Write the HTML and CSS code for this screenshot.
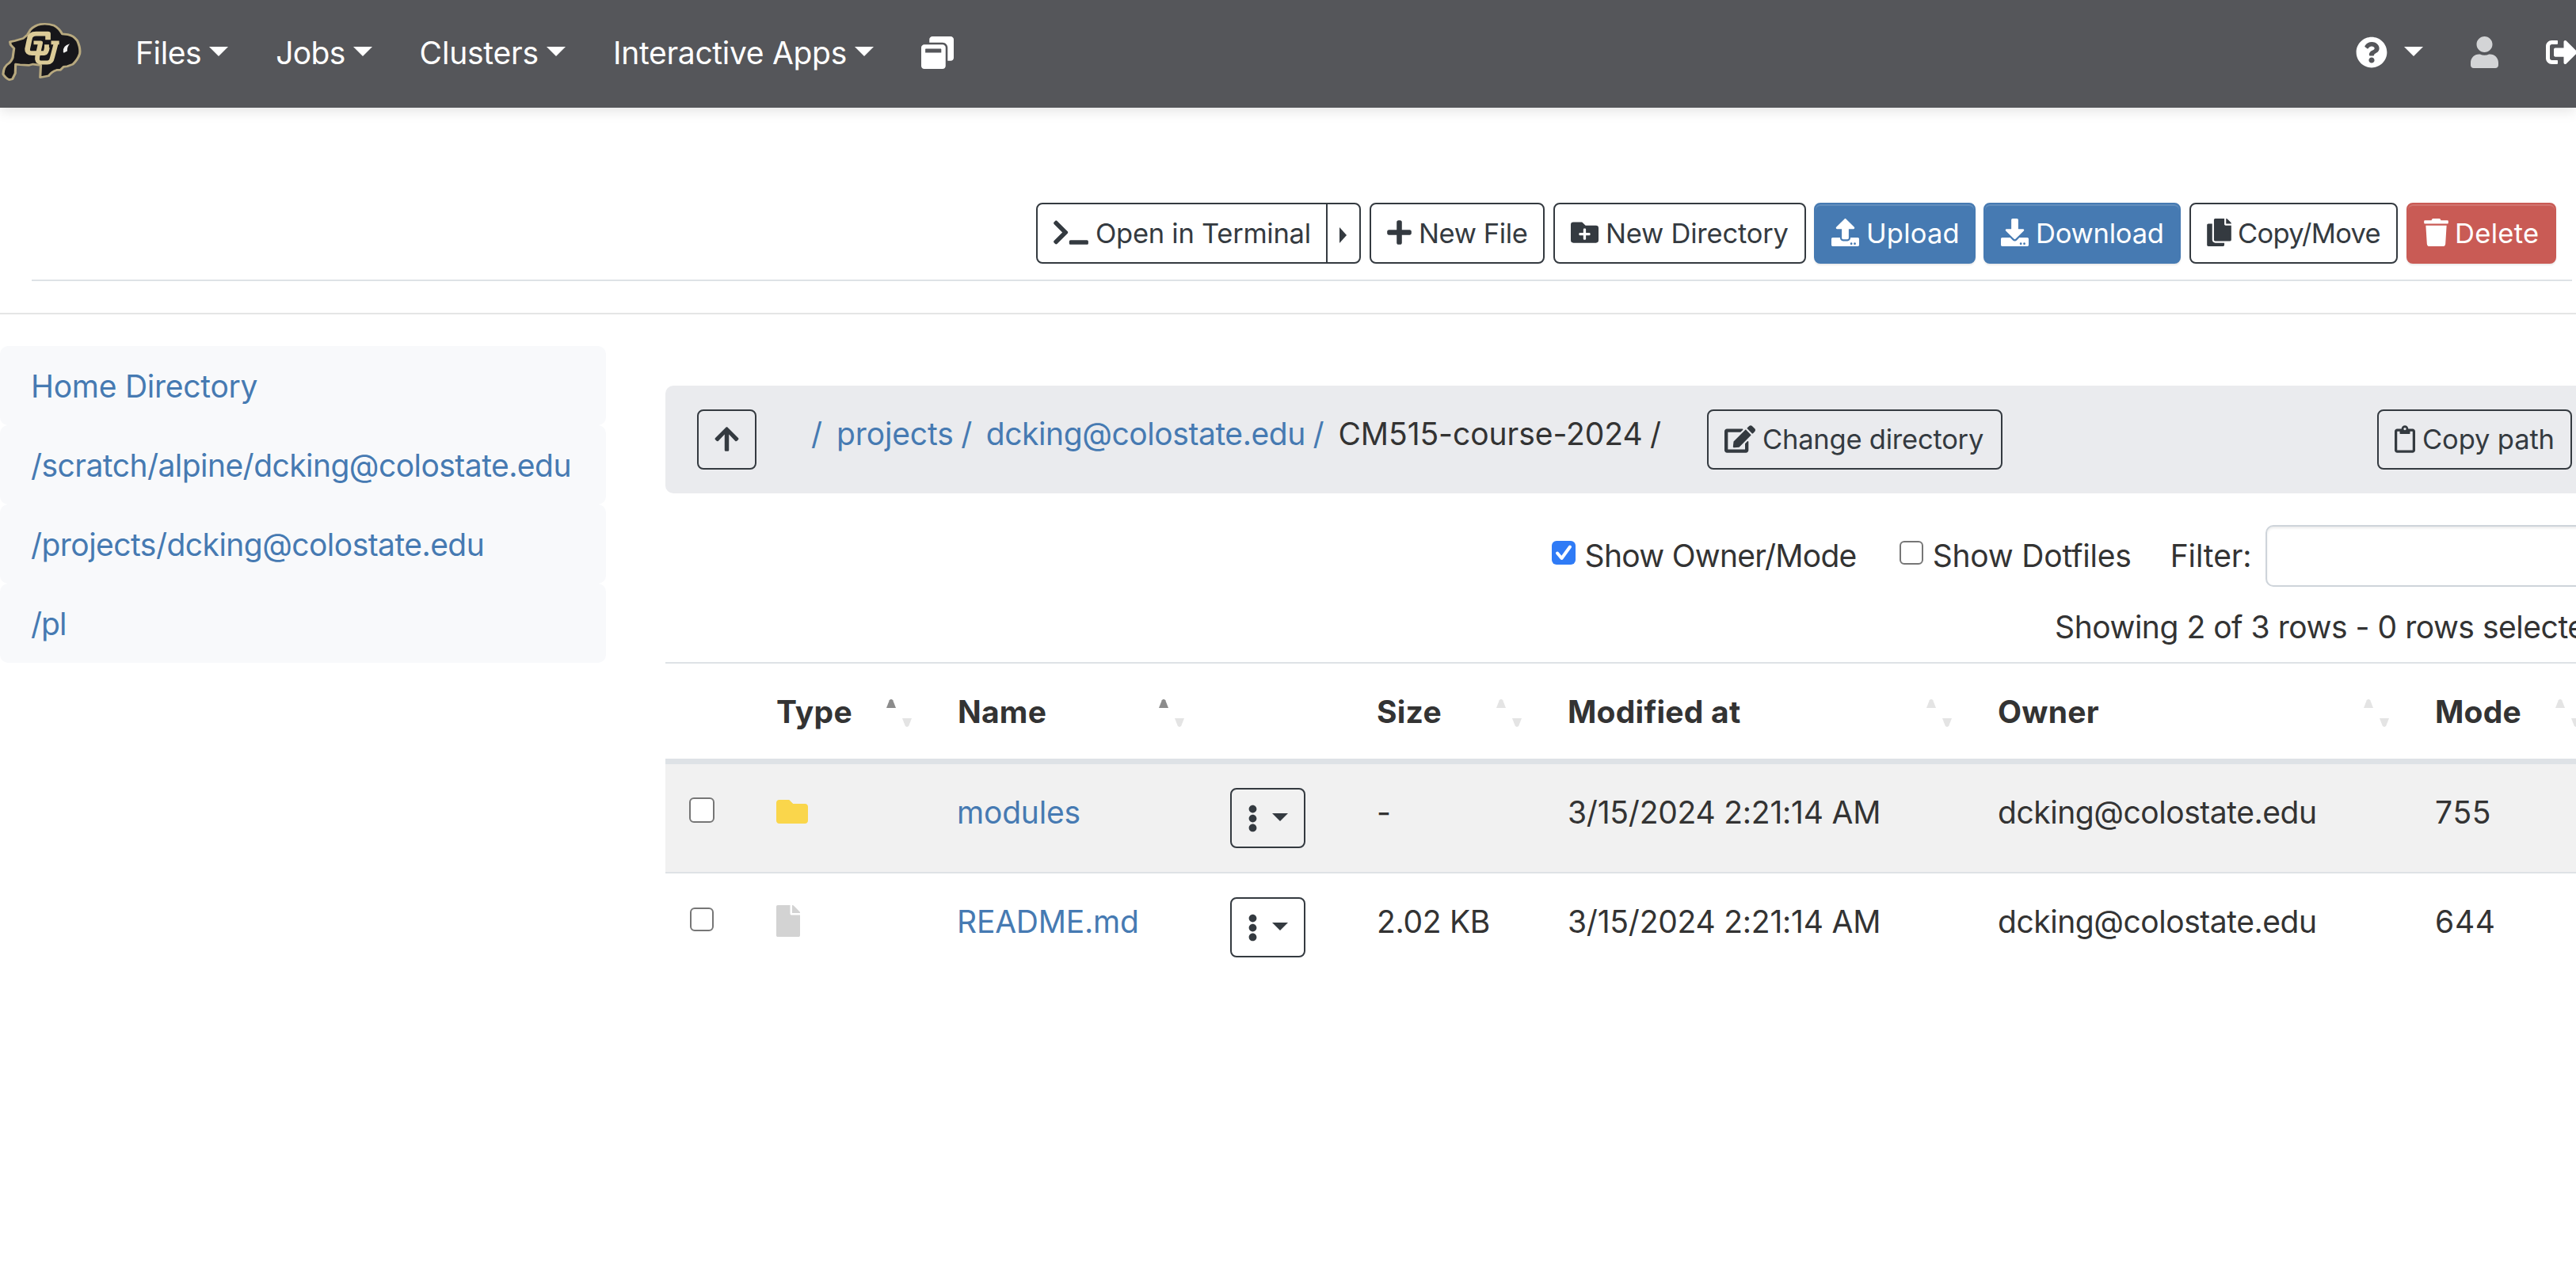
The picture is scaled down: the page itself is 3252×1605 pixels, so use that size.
FILE: index.html
```html
<!DOCTYPE html>
<html lang="en">
<head>
<meta charset="utf-8">
<title>Files</title>
<link rel="stylesheet" href="styles.css">
</head>
<body>
<svg class="defs" aria-hidden="true">
  <symbol id="sort" viewBox="0 0 32 35"><path class="up" d="M0 11 3.8 1.2Q6 -1 8.200 1.200L12 11z"/><path class="down" d="M20 24h12l-3.800 9.800q-2.200 2.200-4.400 0z"/></symbol>
  <symbol id="dots" viewBox="0 0 192 512"><path d="M96 184c39.8 0 72 32.200 72 72s-32.200 72-72 72-72-32.200-72-72 32.200-72 72-72zM24 80c0 39.800 32.200 72 72 72s72-32.200 72-72S135.800 8 96 8 24 40.200 24 80zm0 352c0 39.800 32.200 72 72 72s72-32.200 72-72-32.200-72-72-72-72 32.200-72 72z"/></symbol>
</svg>

<nav class="navbar">
  <a class="brand" href="#">
    <svg class="logo" viewBox="3 80 257 226" preserveAspectRatio="none">
      <path fill="#17161a" stroke="#b8a97f" stroke-width="8" stroke-linejoin="round" d="M30 155 46 151 72 142 86 128 96 108Q110 92 128 88Q150 84 172 93Q188 103 198 125L216 127Q234 131 246 150Q257 178 254 200Q248 222 232 240L214 248 202 250 192 262 180 262Q164 268 154 284L127 290 129 244 104 240 90 244 62 242 48 240 47 274 38 296 28 299Q16 294 8 278Q9 248 27 236Q40 222 40 205L43 180 32 166z"/>
      <path fill="none" stroke="#dccb98" stroke-width="17" stroke-linejoin="round" d="M152 147V124H114Q95 124 93 143L86 182Q85 198 101 198H140Q147 196 149 176"/>
      <path fill="none" stroke="#dccb98" stroke-width="15" stroke-linejoin="round" d="M106 158H128L118 212Q115 233 130 234H150Q163 234 166 214L178 160M162 158H188M148 165V180"/>
      <path fill="#f1f0f0" d="M201 194Q198 170 222 162Q213 174 214 190L203 197z"/>
    </svg>
  </a>
  <div class="nav-left">
    <a class="nav-item files" href="#"><span>Files</span><i class="caret"></i></a>
    <a class="nav-item jobs" href="#"><span>Jobs</span><i class="caret"></i></a>
    <a class="nav-item clusters" href="#"><span>Clusters</span><i class="caret"></i></a>
    <a class="nav-item apps" href="#"><span>Interactive Apps</span><i class="caret"></i></a>
    <a class="nav-icon" href="#"><svg width="41" height="41" viewBox="0 0 512 512"><path d="M512 48v288c0 26.500-21.500 48-48 48h-48V176c0-44.100-35.900-80-80-80H128V48c0-26.500 21.500-48 48-48h288c26.500 0 48 21.500 48 48zM384 176v288c0 26.500-21.500 48-48 48H48c-26.500 0-48-21.500-48-48V176c0-26.500 21.500-48 48-48h288c26.500 0 48 21.500 48 48zm-68 28c0-6.600-5.400-12-12-12H76c-6.600 0-12 5.400-12 12v52h252v-52z"/></svg></a>
  </div>
  <div class="nav-right">
    <a class="help" href="#"><svg width="40" height="40" viewBox="0 0 512 512"><path d="M504 256c0 136.997-111.043 248-248 248S8 392.997 8 256C8 119.083 119.043 8 256 8s248 111.083 248 248zM262.655 90c-54.497 0-89.255 22.957-116.549 63.758-3.536 5.286-2.353 12.415 2.715 16.258l34.699 26.310c5.205 3.947 12.621 3.008 16.665-2.122 17.864-22.658 30.113-35.797 57.303-35.797 20.429 0 45.698 13.148 45.698 32.958 0 14.976-12.363 22.667-32.534 33.976C247.128 238.528 216 254.941 216 296v4c0 6.627 5.373 12 12 12h56c6.627 0 12-5.373 12-12v-1.333c0-28.462 83.186-29.647 83.186-106.667 0-58.002-60.165-102-116.531-102zM256 338c-25.365 0-46 20.635-46 46 0 25.364 20.635 46 46 46s46-20.636 46-46c0-25.365-20.635-46-46-46z"/></svg><i class="caret"></i></a>
    <svg class="user" width="35" height="40" viewBox="0 0 448 512"><path d="M224 256c70.700 0 128-57.300 128-128S294.700 0 224 0 96 57.300 96 128s57.300 128 128 128zm89.600 32h-16.700c-22.200 10.200-46.900 16-72.900 16s-50.600-5.800-72.900-16h-16.700C60.200 288 0 348.200 0 422.400V464c0 26.500 21.500 48 48 48h352c26.500 0 48-21.500 48-48v-41.600c0-74.200-60.200-134.400-134.400-134.400z"/></svg>
    <svg width="40" height="40" viewBox="0 0 512 512"><path d="M497 273L329 441c-15 15-41 4.500-41-17v-96H152c-13.300 0-24-10.700-24-24v-96c0-13.300 10.700-24 24-24h136V88c0-21.400 25.900-32 41-17l168 168c9.300 9.400 9.300 24.600 0 34zM192 436v-40c0-6.600-5.400-12-12-12H96c-17.700 0-32-14.300-32-32V160c0-17.700 14.300-32 32-32h84c6.600 0 12-5.400 12-12V76c0-6.600-5.400-12-12-12H96c-53 0-96 43-96 96v192c0 53 43 96 96 96h84c6.600 0 12-5.400 12-12z"/></svg>
  </div>
</nav>

<header class="toolbar">
  <div class="btn-group">
    <button class="btn terminal"><svg width="44" height="35" viewBox="0 0 640 512"><path d="M257.981 272.971L63.638 467.314c-9.373 9.373-24.569 9.373-33.941 0L7.029 444.647c-9.357-9.357-9.375-24.522-.04-33.901L161.011 256 6.990 101.255c-9.335-9.379-9.317-24.544.04-33.901l22.667-22.667c9.373-9.373 24.569-9.373 33.941 0L257.981 239.030c9.373 9.372 9.373 24.568 0 33.941zM640 456v-32c0-13.255-10.745-24-24-24H312c-13.255 0-24 10.745-24 24v32c0 13.255 10.745 24 24 24h304c13.255 0 24-10.745 24-24z"/></svg><span>Open in Terminal</span></button>
    <button class="btn more" aria-label="More terminals"><i class="caret-right"></i></button>
  </div>
  <button class="btn new-file"><svg width="31" height="35" viewBox="0 0 448 512"><path d="M416 208H272V64c0-17.670-14.330-32-32-32h-32c-17.670 0-32 14.330-32 32v144H32c-17.670 0-32 14.330-32 32v32c0 17.670 14.330 32 32 32h144v144c0 17.670 14.330 32 32 32h32c17.670 0 32-14.330 32-32V304h144c17.670 0 32-14.330 32-32v-32c0-17.670-14.330-32-32-32z"/></svg><span>New File</span></button>
  <button class="btn new-dir"><svg width="35" height="35" viewBox="0 0 512 512"><path d="M464 128H272L208 64H48A48 48 0 0 0 0 112V400a48 48 0 0 0 48 48H464a48 48 0 0 0 48-48V176A48 48 0 0 0 464 128ZM359.500 296a16 16 0 0 1-16 16h-64v64a16 16 0 0 1-16 16h-16a16 16 0 0 1-16-16V312h-64a16 16 0 0 1-16-16V280a16 16 0 0 1 16-16h64V200a16 16 0 0 1 16-16h16a16 16 0 0 1 16 16v64h64a16 16 0 0 1 16 16Z"/></svg><span>New Directory</span></button>
  <button class="btn primary upload"><svg width="35" height="35" viewBox="0 0 512 512"><path d="M296 384h-80c-13.300 0-24-10.700-24-24V192h-87.700c-17.800 0-26.700-21.500-14.100-34.100L242.300 5.700c7.500-7.500 19.800-7.500 27.300 0l152.200 152.200c12.600 12.600 3.700 34.100-14.100 34.100H320v168c0 13.300-10.700 24-24 24zm216-8v112c0 13.300-10.700 24-24 24H24c-13.300 0-24-10.700-24-24V376c0-13.300 10.700-24 24-24h136v8c0 30.900 25.100 56 56 56h80c30.900 0 56-25.100 56-56v-8h136c13.300 0 24 10.700 24 24zm-124 88c0-11-9-20-20-20s-20 9-20 20 9 20 20 20 20-9 20-20zm64 0c0-11-9-20-20-20s-20 9-20 20 9 20 20 20 20-9 20-20z"/></svg><span>Upload</span></button>
  <button class="btn primary download"><svg width="35" height="35" viewBox="0 0 512 512"><path d="M216 0h80c13.300 0 24 10.700 24 24v168h87.700c17.800 0 26.700 21.500 14.100 34.100L269.700 378.300c-7.500 7.500-19.800 7.500-27.300 0L90.100 226.100c-12.600-12.600-3.700-34.100 14.100-34.100H192V24c0-13.300 10.700-24 24-24zm296 376v112c0 13.300-10.700 24-24 24H24c-13.300 0-24-10.700-24-24V376c0-13.300 10.700-24 24-24h146.700l49 49c20.100 20.100 52.500 20.100 72.600 0l49-49H488c13.300 0 24 10.700 24 24zm-124 88c0-11-9-20-20-20s-20 9-20 20 9 20 20 20 20-9 20-20zm64 0c0-11-9-20-20-20s-20 9-20 20 9 20 20 20 20-9 20-20z"/></svg><span>Download</span></button>
  <button class="btn copy"><svg width="31" height="35" viewBox="0 0 448 512"><path d="M320 448v40c0 13.255-10.745 24-24 24H24c-13.255 0-24-10.745-24-24V120c0-13.255 10.745-24 24-24h72v296c0 30.879 25.121 56 56 56h168zm0-344V0H152c-13.255 0-24 10.745-24 24v368c0 13.255 10.745 24 24 24h272c13.255 0 24-10.745 24-24V128H344c-13.200 0-24-10.800-24-24zm120.971-31.029L375.029 7.029A24 24 0 0 0 358.059 0H352v96h96v-6.059a24 24 0 0 0-7.029-16.970z"/></svg><span>Copy/Move</span></button>
  <button class="btn danger delete"><svg width="31" height="35" viewBox="0 0 448 512"><path d="M432 32H312l-9.400-18.700A24 24 0 0 0 281.100 0H166.800a23.720 23.720 0 0 0-21.400 13.300L136 32H16A16 16 0 0 0 0 48v32a16 16 0 0 0 16 16h416a16 16 0 0 0 16-16V48a16 16 0 0 0-16-16zM53.200 467a48 48 0 0 0 47.900 45h245.800a48 48 0 0 0 47.900-45L416 128H32z"/></svg><span>Delete</span></button>
</header>
<hr class="divider">

<div class="content">
  <aside class="sidebar">
    <a class="home" href="#">Home Directory</a>
    <a href="#">/scratch/alpine/dcking@colostate.edu</a>
    <a href="#">/projects/dcking@colostate.edu</a>
    <a class="pl" href="#">/pl</a>
  </aside>

  <main class="main">
    <div class="pathbar">
      <button class="btn parent" aria-label="Up"><svg width="31" height="35" viewBox="0 0 448 512"><path d="M34.900 289.500l-22.200-22.200c-9.400-9.400-9.400-24.600 0-33.900L207 39c9.400-9.400 24.600-9.400 33.900 0l194.300 194.300c9.400 9.400 9.400 24.600 0 33.900L413 289.400c-9.500 9.500-25 9.300-34.300-.4L264 168.600V456c0 13.300-10.700 24-24 24h-32c-13.300 0-24-10.700-24-24V168.600L69.200 289.100c-9.300 9.800-24.800 10-34.300.4z"/></svg></button>
      <div class="crumbs">
        <a class="sep root" href="#">/</a><a class="projects" href="#">projects</a><a class="sep" href="#">/</a><a class="account" href="#">dcking@colostate.edu</a><a class="sep account-sep" href="#">/</a><span class="current">CM515-course-2024</span><span class="sep">/</span>
      </div>
      <button class="btn change"><svg width="39" height="35" viewBox="0 0 576 512"><path d="M402.600 83.200l90.200 90.200c3.800 3.800 3.800 10 0 13.800L274.400 405.600l-92.800 10.300c-12.400 1.400-22.900-9.100-21.500-21.500l10.300-92.800L388.800 83.200c3.800-3.800 10-3.800 13.800 0zm162-22.900l-48.800-48.800c-15.200-15.200-39.900-15.200-55.200 0l-35.400 35.400c-3.800 3.800-3.800 10 0 13.800l90.200 90.200c3.800 3.800 10 3.800 13.800 0l35.400-35.400c15.200-15.300 15.200-40 0-55.200zM384 346.200V448H64V128h229.800c3.200 0 6.200-1.300 8.500-3.500l40-40c7.600-7.600 2.200-20.500-8.500-20.500H48C21.500 64 0 85.500 0 112v352c0 26.500 21.500 48 48 48h352c26.500 0 48-21.500 48-48V306.200c0-10.700-12.900-16-20.500-8.500l-40 40c-2.200 2.300-3.500 5.300-3.500 8.500z"/></svg><span>Change directory</span></button>
      <button class="btn copy-path"><svg width="26" height="35" viewBox="0 0 384 512"><path d="M336 64h-80c0-35.300-28.700-64-64-64s-64 28.700-64 64H48C21.500 64 0 85.500 0 112v352c0 26.500 21.500 48 48 48h288c26.500 0 48-21.500 48-48V112c0-26.500-21.500-48-48-48zM192 40c13.300 0 24 10.700 24 24s-10.700 24-24 24-24-10.700-24-24 10.700-24 24-24zm144 418c0 3.300-2.700 6-6 6H54c-3.300 0-6-2.700-6-6V118c0-3.300 2.700-6 6-6h42v36c0 6.600 5.400 12 12 12h168c6.600 0 12-5.400 12-12v-36h42c3.300 0 6 2.700 6 6z"/></svg><span>Copy path</span></button>
    </div>

    <div class="controls">
      <label class="owner-toggle"><span class="check checked"><svg width="30" height="30" viewBox="0 0 30 30"><path d="M7 15.500 12.500 22 23 7.500"/></svg></span><span>Show Owner/Mode</span></label>
      <label class="dot-toggle"><span class="check"></span><span>Show Dotfiles</span></label>
      <label class="filter"><span>Filter:</span><input type="text"></label>
    </div>
    <div class="status">Showing 2 of 3 rows - 0 rows selected</div>

    <table class="listing">
      <colgroup><col class="c-check"><col class="c-type"><col class="c-name"><col class="c-menu"><col class="c-size"><col class="c-date"><col class="c-owner"><col class="c-mode"></colgroup>
      <thead>
        <tr>
          <th></th>
          <th><div class="head asc type"><span>Type</span><svg><use href="#sort"/></svg></div></th>
          <th><div class="head asc"><span>Name</span><svg><use href="#sort"/></svg></div></th>
          <th></th>
          <th><div class="head"><span>Size</span><svg><use href="#sort"/></svg></div></th>
          <th><div class="head"><span>Modified at</span><svg><use href="#sort"/></svg></div></th>
          <th><div class="head"><span>Owner</span><svg><use href="#sort"/></svg></div></th>
          <th><div class="head"><span>Mode</span><svg><use href="#sort"/></svg></div></th>
        </tr>
      </thead>
      <tbody>
        <tr class="odd">
          <td><span class="check large"></span></td>
          <td><svg class="folder" width="40" height="40" viewBox="0 0 512 512"><path d="M464 128H272l-64-64H48C21.500 64 0 85.500 0 112v288c0 26.500 21.500 48 48 48h416c26.500 0 48-21.500 48-48V176c0-26.500-21.500-48-48-48z"/></svg></td>
          <td class="text name"><a href="#">modules</a></td>
          <td><button class="btn menu" aria-label="Actions"><svg width="13" height="35"><use href="#dots"/></svg><i class="caret small"></i></button></td>
          <td class="text">-</td>
          <td class="text date">3/15/2024 2:21:14 AM</td>
          <td class="text email">dcking@colostate.edu</td>
          <td class="text mode">755</td>
        </tr>
        <tr>
          <td><span class="check"></span></td>
          <td><svg class="file" width="30" height="40" viewBox="0 0 384 512"><path d="M224 136V0H24C10.700 0 0 10.700 0 24v464c0 13.300 10.700 24 24 24h336c13.300 0 24-10.700 24-24V160H248c-13.200 0-24-10.800-24-24zm160-14.100v6.100H256V0h6.100c6.400 0 12.500 2.500 17 7l97.900 98c4.500 4.500 7 10.600 7 16.900z"/></svg></td>
          <td class="text name"><a href="#">README.md</a></td>
          <td><button class="btn menu" aria-label="Actions"><svg width="13" height="35"><use href="#dots"/></svg><i class="caret small"></i></button></td>
          <td class="text size">2.02 KB</td>
          <td class="text date">3/15/2024 2:21:14 AM</td>
          <td class="text email">dcking@colostate.edu</td>
          <td class="text mode">644</td>
        </tr>
      </tbody>
    </table>
  </main>
</div>
</body>
</html>
```
FILE: styles.css
```css
* { box-sizing: border-box; }
html, body { margin: 0; height: 100%; overflow: hidden; }
body {
  background: #fff;
  color: #333;
  font: 39px/60px Inter, "Liberation Sans", sans-serif;
  letter-spacing: -0.1px;
}
a { color: #467ab2; text-decoration: none; }
svg { display: block; flex: none; fill: currentColor; }
.defs { position: absolute; width: 0; height: 0; }

/* Navigation bar */
.navbar {
  display: flex;
  align-items: center;
  height: 136px;
  padding-bottom: 6px;
  background: #55565a;
  color: #fff;
  box-shadow: 0 5px 15px rgba(0, 0, 0, .1);
}
.navbar a { color: inherit; }
.brand { width: 171px; padding-left: 2px; flex: none; }
.logo { width: 101px; height: 75px; }
.nav-left { display: flex; align-items: center; gap: 60px; }
.nav-item { display: flex; align-items: center; }
.nav-item span { padding-top: 4px; white-space: nowrap; }
.nav-item .caret { margin-left: 10px; }
.nav-icon { padding-top: 2px; }
.files { letter-spacing: -.41px; }
.jobs { letter-spacing: -.68px; }
.clusters { letter-spacing: -.2px; }
.apps { letter-spacing: -.3px; }
.nav-right { display: flex; align-items: center; margin: 0 -2px 0 auto; flex: none; }
.nav-right svg { margin-top: 2px; }
.nav-right .user { color: #d3d4d6; margin-right: 60px; }
.help { display: flex; align-items: center; gap: 21px; margin-right: 60px; }
.caret { display: block; border: 12px solid transparent; border-top-color: currentColor; border-bottom: 0; }
.caret.small { border-width: 10px 10px 0; margin: -2px 0 0 18px; }

/* Buttons */
.btn {
  display: flex;
  align-items: center;
  gap: 9px;
  height: 77px;
  padding: 0 0 0 20px;
  border: 2px solid #343a40;
  border-radius: 8px;
  background: transparent;
  color: #343a40;
  font: 34.5px/52px Inter, "Liberation Sans", sans-serif;
  letter-spacing: -.22px;
  white-space: nowrap;
  flex: none;
}
.btn svg { margin-top: -2px; }
.primary { background: #467ab2; border-color: #467ab2; color: #fff; }
.danger { background: #c95b55; border-color: #c95b55; color: #fff; }
.primary, .danger { box-shadow: inset 0 2px 0 rgba(255, 255, 255, .15), 0 2px 2px rgba(0, 0, 0, .08); }

/* Action toolbar */
.toolbar {
  display: flex;
  justify-content: flex-end;
  gap: 11px;
  height: 219px;
  margin: 0 5px 0 40px;
  padding: 120px 20px 0 0;
  border-bottom: 2px solid #dee2e6;
}
.btn-group { display: flex; width: 410px; }
.terminal { width: 368px; border-radius: 8px 0 0 8px; letter-spacing: -.27px; }
.more { width: 44px; margin-left: -2px; padding-left: 15px; border-radius: 0 8px 8px 0; }
.caret-right { display: block; margin-top: 5px; border: 10px solid transparent; border-left: 9px solid currentColor; border-right: 0; }
.new-file { width: 221px; letter-spacing: -.4px; }
.new-dir { width: 319px; margin-right: -1px; }
.upload { width: 204px; letter-spacing: .19px; margin-right: -1px; }
.download { width: 249px; }
.copy { width: 263px; gap: 8px; letter-spacing: -.7px; }
.delete { width: 189px; gap: 8px; letter-spacing: .31px; }
.divider { margin: 40px 0; border: 0; border-top: 2px solid #e4e5e5; }

.content { display: flex; gap: 75px; }

/* Favourite locations */
.sidebar { width: 765px; flex: none; }
.sidebar a {
  display: block;
  height: 100px;
  padding: 21px 0 0 39px;
  border-radius: 10px;
  background: #f8f9fb;
  letter-spacing: -.54px;
  white-space: nowrap;
}
.sidebar .home { letter-spacing: -.26px; }
.sidebar .pl { letter-spacing: -1px; }

/* Path bar */
.main { width: 2447px; flex: none; padding-top: 50px; }
.pathbar {
  display: flex;
  align-items: center;
  height: 136px;
  padding: 0 40px;
  border-radius: 10px;
  background: #eaebee;
}
.pathbar .btn { height: 76px; }
.parent { width: 75px; }
.crumbs { display: flex; margin-left: 69px; padding-bottom: 14px; width: 1131px; white-space: nowrap; }
.sep { margin: 0 17.5px 0 9.5px; }
.sep.root { margin: 0 18px 0 0; }
.projects { letter-spacing: -.12px; }
.account { letter-spacing: -.42px; }
.account-sep { margin-right: 18px; }
.current { letter-spacing: -.05px; }
.change { width: 373px; }
.copy-path { width: 246px; margin-left: auto; letter-spacing: -.12px; }

/* Listing controls */
.controls { display: flex; justify-content: flex-end; align-items: center; margin-top: 40px; height: 78px; white-space: nowrap; }
.controls label { display: flex; align-items: center; }
.owner-toggle { letter-spacing: -.72px; margin-right: 54px; gap: 12px; }
.dot-toggle { letter-spacing: -.2px; margin-right: 49px; gap: 12px; }
.filter input {
  width: 427px;
  height: 78px;
  margin-left: 17.5px;
  border: 2px solid #ced4da;
  border-radius: 10px;
  box-shadow: inset 0 2px 3px rgba(0, 0, 0, .08);
}
.check { display: block; width: 30px; height: 30px; border: 2px solid #767676; border-radius: 6px; background: #fff; flex: none; }
.check.checked { border: 0; background: #2f7bf6; }
.check svg { fill: none; stroke: #fff; stroke-width: 4; stroke-linecap: round; stroke-linejoin: round; }
.controls .check { margin-top: -8px; }
.status { margin-top: 21px; height: 74px; text-align: right; letter-spacing: -.47px; white-space: nowrap; }

/* File listing */
.listing { width: 2447px; table-layout: fixed; border-spacing: 0; }
.c-check { width: 110px; }
.c-type { width: 230px; }
.c-name { width: 344px; }
.c-menu { width: 185px; }
.c-size { width: 241px; }
.c-date { width: 543px; }
.c-owner { width: 552px; }
.c-mode { width: 242px; }
th, td { padding: 0 29px; vertical-align: top; text-align: left; border-top: 2px solid #dee2e6; white-space: nowrap; }
th { height: 127px; padding-top: 31px; border-bottom: 5px solid #dee2e6; font-weight: 700; letter-spacing: .25px; }
td { height: 138px; padding-top: 30px; }
td.text { padding-top: 31px; }
td.name { padding-left: 28px; letter-spacing: -.2px; }
td.size { letter-spacing: -.3px; }
td.date { letter-spacing: -.22px; }
.odd td { background: #f1f1f1; }
.head { display: flex; justify-content: space-between; align-items: flex-start; }
.head.type { padding-left: 1px; }
.head svg { width: 32px; height: 35px; margin-top: 14px; color: #e4e4e4; }
.up { fill: var(--up, #e4e4e4); }
.down { fill: #e4e4e4; }
.asc { --up: #8c8c8c; }
td .check { margin: 13px 0 0 2px; }
td .check.large { width: 32px; height: 32px; margin: 12px 0 0 1px; }
td > svg { margin: 10px 0 0 1px; }
.folder { color: #fad64b; }
.file { color: #d3d3d3; }
.menu { width: 95px; height: 76px; gap: 0; }
.menu svg { margin-top: 0; }
.email { letter-spacing: -.45px; }
.mode { letter-spacing: .7px; }
```
